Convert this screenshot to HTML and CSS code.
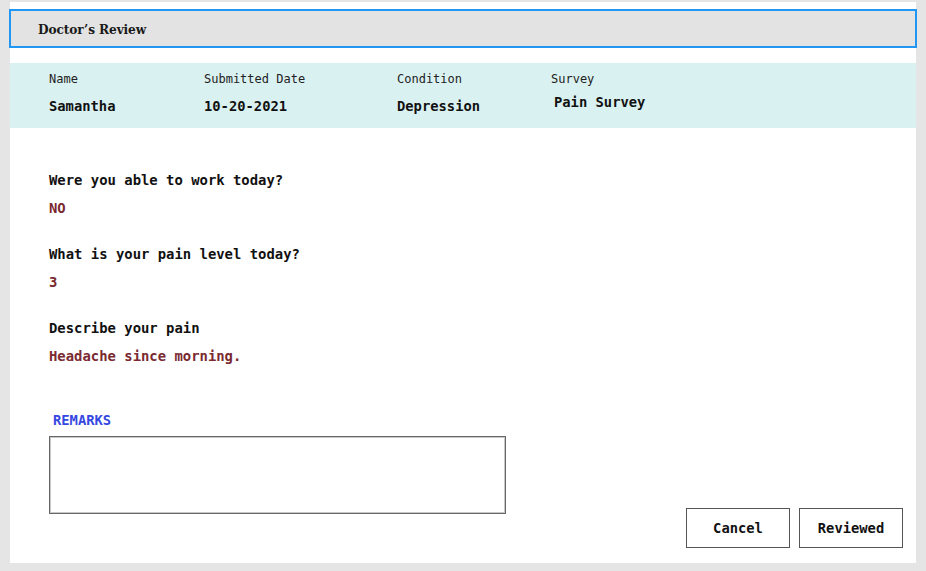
FILE: index.html
```html
<!DOCTYPE html>
<html lang="en">
<head>
<meta charset="utf-8">
<title>Doctor's Review</title>
<link rel="stylesheet" href="styles.css">
</head>
<body>
<div class="panel">
  <div class="header"><h1 class="title">Doctor’s Review</h1></div>
  <div class="info">
    <div class="col">
      <div class="label">Name</div>
      <div class="value">Samantha</div>
    </div>
    <div class="col">
      <div class="label">Submitted Date</div>
      <div class="value">10-20-2021</div>
    </div>
    <div class="col">
      <div class="label">Condition</div>
      <div class="value">Depression</div>
    </div>
    <div class="col">
      <div class="label">Survey</div>
      <div class="value value-survey">Pain Survey</div>
    </div>
  </div>
  <div class="questions">
    <div class="qa">
      <div class="question">Were you able to work today?</div>
      <div class="answer">NO</div>
    </div>
    <div class="qa">
      <div class="question">What is your pain level today?</div>
      <div class="answer">3</div>
    </div>
    <div class="qa">
      <div class="question">Describe your pain</div>
      <div class="answer">Headache since morning.</div>
    </div>
  </div>
  <div class="footer">
    <div class="remarks">
      <label class="remarks-label" for="remarks">REMARKS</label>
      <textarea id="remarks" class="remarks-box"></textarea>
    </div>
    <div class="actions">
      <button class="btn">Cancel</button>
      <button class="btn">Reviewed</button>
    </div>
  </div>
</div>
</body>
</html>
```
FILE: styles.css
```css
* { box-sizing: border-box; }
html, body { margin: 0; padding: 0; }
body {
  background: #e5e5e5;
  width: 926px;
  height: 571px;
  overflow: hidden;
  font-family: "DejaVu Sans Mono", "Liberation Mono", monospace;
  color: #111;
}
.panel {
  margin: 2px 0 0 10px;
  width: 906px;
  height: 561px;
  background: #fff;
  display: flex;
  flex-direction: column;
}
.header {
  margin: 7px -1px 0 -1px;
  height: 39px;
  border: 2px solid #2196f3;
  background: #e3e3e3;
  display: flex;
  align-items: center;
  padding-left: 27px;
}
.title {
  margin: 0;
  font-family: "DejaVu Serif", "Liberation Serif", serif;
  font-stretch: condensed;
  font-weight: bold;
  font-size: 13.5px;
  letter-spacing: -0.1px;
  color: #1a1a1a;
}
.info {
  margin-top: 15px;
  height: 65px;
  background: #daf1f1;
  display: grid;
  grid-template-columns: 155px 193px 154px auto;
  padding: 8px 0 0 39px;
}
.label {
  font-size: 12px;
  line-height: 16px;
  color: #222;
}
.value {
  margin-top: 10px;
  font-size: 13.8px;
  line-height: 18px;
  font-weight: bold;
  color: #111;
}
.value-survey {
  margin-top: 6px;
  margin-left: 3px;
}
.questions {
  padding: 42px 0 0 39px;
  display: flex;
  flex-direction: column;
  gap: 26px;
}
.question {
  font-size: 13.9px;
  line-height: 20px;
  font-weight: bold;
  color: #111;
}
.answer {
  margin-top: 8px;
  font-size: 13.9px;
  line-height: 20px;
  font-weight: bold;
  color: #7a2a30;
}
.footer {
  margin-top: 44px;
  display: flex;
  justify-content: space-between;
  align-items: flex-end;
  padding: 0 13px 0 39px;
}
.remarks {
  display: flex;
  flex-direction: column;
  padding-bottom: 34px;
}
.remarks-label {
  margin-left: 4px;
  font-size: 13.8px;
  line-height: 20px;
  font-weight: bold;
  color: #3548e0;
}
.remarks-box {
  margin-top: 6px;
  width: 457px;
  height: 78px;
  border: 1px solid #666;
  box-shadow: inset 0 0 0 1px #c8c8c8;
  resize: none;
  padding: 0;
  background: #fff;
  display: block;
}
.actions {
  display: flex;
  gap: 9px;
}
.btn {
  width: 104px;
  height: 40px;
  background: #fff;
  border: 1px solid #555;
  font-family: "DejaVu Sans Mono", "Liberation Mono", monospace;
  font-weight: bold;
  font-size: 13.8px;
  color: #111;
  padding: 0;
}
```
